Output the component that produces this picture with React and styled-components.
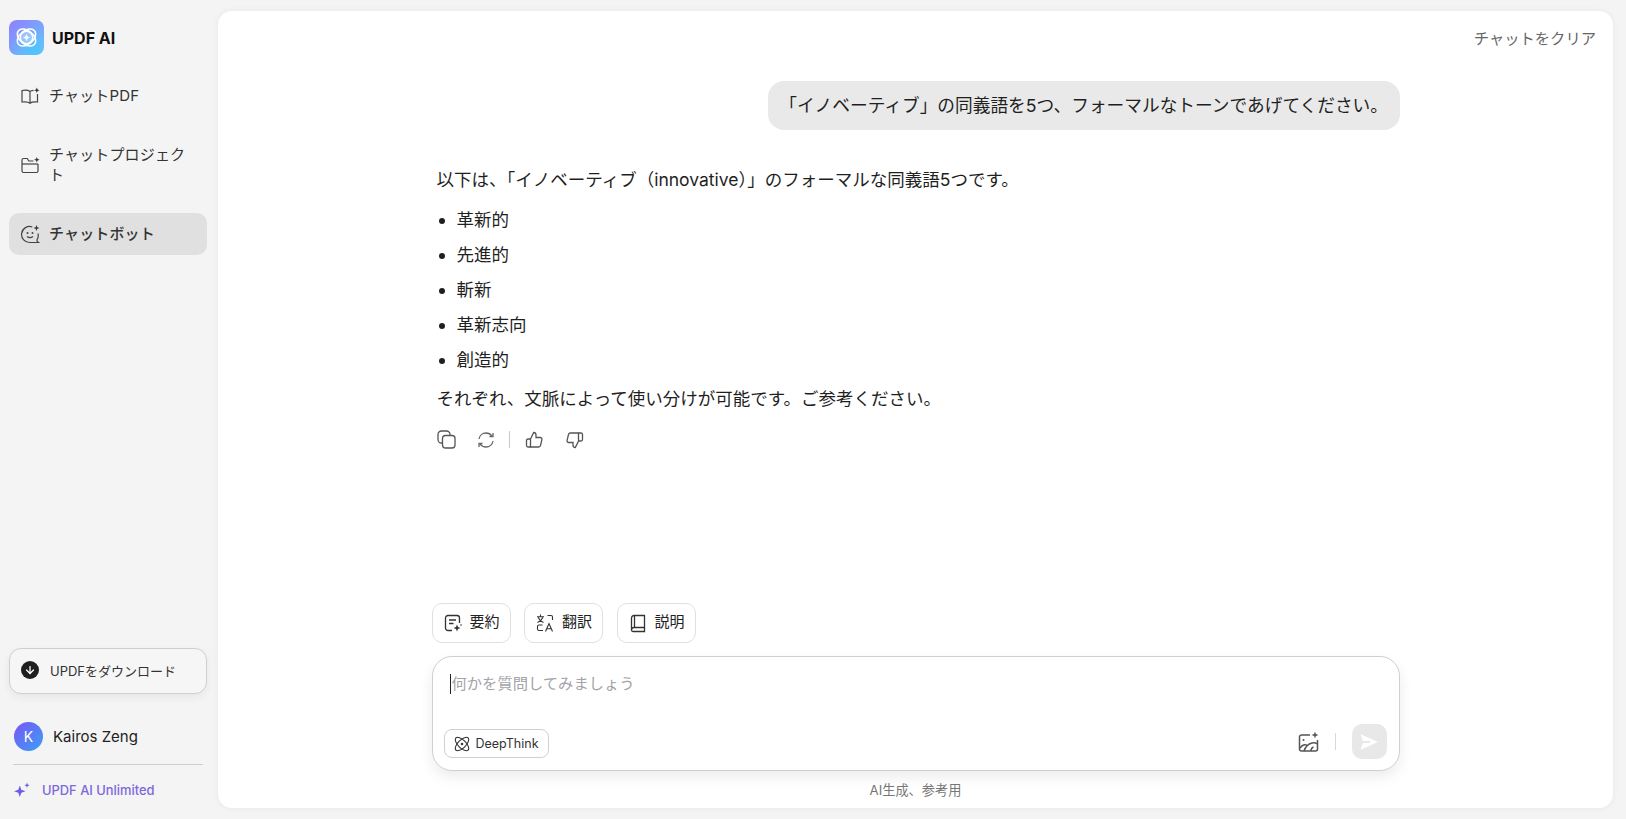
import React from 'react';
import styled, { createGlobalStyle } from 'styled-components';
import { ArrowDown, Atom } from 'lucide-react';

const GlobalStyle = createGlobalStyle`
  html, body { margin: 0; height: 100%; }
  body {
    background: #f4f4f4;
    color: #1f1f1f;
    font-family: "Inter", "Noto Sans CJK JP", sans-serif;
    overflow: hidden;
  }
  * { box-sizing: border-box; }
`;

const Page = styled.div`
  display: flex;
  width: 1626px;
  height: 819px;
  padding: 11px 13px 11px 9px;
`;

const Sidebar = styled.aside`
  width: 209px;
  flex: none;
  display: flex;
  flex-direction: column;
  padding-right: 11px;
`;

const Brand = styled.div`
  display: flex;
  align-items: center;
  gap: 8px;
  margin-top: 9px;
  font-size: 16px;
  font-weight: 700;
  color: #111;
`;

const LogoBox = styled.div`
  width: 35px;
  height: 35px;
  border-radius: 8px;
  background: radial-gradient(circle at 70% 85%, #4fc3fb 0%, rgba(79, 195, 251, 0) 60%),
    linear-gradient(135deg, #8d80ff 0%, #7ba4fb 55%, #7cc4fb 100%);
  display: flex;
  align-items: center;
  justify-content: center;
`;

const Nav = styled.nav`
  display: flex;
  flex-direction: column;
  margin-top: 20px;
  gap: 27px;
`;

const NavItem = styled.div`
  display: flex;
  align-items: center;
  gap: 9px;
  min-height: 42px;
  padding: 0 11px;
  border-radius: 10px;
  font-size: 15px;
  line-height: 20px;
  letter-spacing: 0.15px;
  color: #333;
  font-weight: ${p => (p.$active ? 500 : 400)};
  background: ${p => (p.$active ? '#e0e0e0' : 'transparent')};
  svg { flex: none; }
`;

const Spacer = styled.div`
  flex: 1;
`;

const DownloadButton = styled.div`
  display: flex;
  align-items: center;
  gap: 11px;
  height: 46px;
  padding: 0 11px 2px;
  border: 1px solid #cfcfcf;
  border-radius: 12px;
  background: #f6f6f6;
  box-shadow: 0 3px 8px rgba(0, 0, 0, 0.06);
  font-size: 13px;
  color: #333;
`;

const DownloadDot = styled.span`
  width: 18px;
  height: 18px;
  border-radius: 50%;
  background: #1f1f1f;
  color: #fff;
  display: flex;
  align-items: center;
  justify-content: center;
`;

const UserRow = styled.div`
  display: flex;
  align-items: center;
  gap: 10px;
  margin: 28px 0 0 5px;
  font-size: 15px;
  color: #222;
`;

const Avatar = styled.span`
  width: 29px;
  height: 29px;
  border-radius: 50%;
  background: linear-gradient(135deg, #7a55f5, #3aa0f5);
  color: #fff;
  font-size: 14px;
  display: flex;
  align-items: center;
  justify-content: center;
`;

const Divider = styled.div`
  height: 1px;
  background: #cfcfcf;
  margin: 13px 4px 0;
`;

const Unlimited = styled.div`
  display: flex;
  align-items: center;
  gap: 12px;
  margin: 17px 0 10px 5px;
  font-size: 12.9px;
  font-weight: 500;
  color: #7d68dd;
`;

const Panel = styled.main`
  flex: 1;
  background: #fff;
  border-radius: 14px;
  box-shadow: 0 0 6px rgba(0, 0, 0, 0.06);
  display: flex;
  flex-direction: column;
  align-items: center;
  position: relative;
`;

const ClearLink = styled.div`
  align-self: flex-end;
  margin: 18px 17px 0 0;
  font-size: 15.3px;
  line-height: 20px;
  color: #666;
`;

const Column = styled.div`
  width: 968px;
  flex: 1;
  display: flex;
  flex-direction: column;
`;

const Bubble = styled.div`
  align-self: flex-end;
  margin-top: 32px;
  height: 49px;
  padding: 0 11.5px 3px;
  border-radius: 16px;
  background: #e9e9e9;
  font-size: 17.7px;
  display: flex;
  align-items: center;
  white-space: nowrap;
`;

const Answer = styled.div`
  margin: 0 0 0 5px;
  padding-top: 38px;
  font-size: 17.5px;
  line-height: 24px;
  color: #1f1f1f;
`;

const Para = styled.p`
  margin: 0;
`;

const List = styled.ul`
  margin: 16px 0 15px;
  padding: 0 0 0 20px;
  li { margin-bottom: 11px; }
  li:last-child { margin-bottom: 0; }
`;

const Actions = styled.div`
  display: flex;
  align-items: center;
  margin: 19px 0 0 5px;
  color: #555;
  gap: 21px;
  svg:last-child { margin-left: 2px; }
`;

const ActionDivider = styled.span`
  width: 1px;
  height: 17px;
  background: #c9c9c9;
  margin: 0 -6px 0 -7px;
`;

const Grow = styled.div`
  flex: 1;
`;

const Chips = styled.div`
  display: flex;
  gap: 13.5px;
`;

const Chip = styled.div`
  display: flex;
  align-items: center;
  gap: 7px;
  height: 40px;
  padding: 0 10px;
  border: 1px solid #e0e0e0;
  border-radius: 10px;
  background: #fff;
  svg { flex: none; }
`;

const ChipLabel = styled.span`
  font-size: 15px;
  line-height: 20px;
  color: #222;
  margin-top: -2px;
`;

const InputBox = styled.div`
  height: 115px;
  margin-top: 13px;
  border: 1px solid #d0d0d0;
  border-radius: 20px;
  background: #fff;
  box-shadow: 0 6px 14px rgba(0, 0, 0, 0.08);
  display: flex;
  flex-direction: column;
  justify-content: space-between;
  padding: 17px 12px 11px 11px;
`;

const Placeholder = styled.div`
  margin-left: 6px;
  padding-left: 1px;
  border-left: 1px solid #222;
  height: 20px;
  line-height: 20px;
  font-size: 15.3px;
  color: #a3a3a8;
`;

const InputBar = styled.div`
  display: flex;
  align-items: flex-end;
  justify-content: space-between;
`;

const DeepThink = styled.div`
  display: flex;
  align-items: center;
  gap: 5px;
  height: 29px;
  margin-bottom: 1px;
  padding: 0 9px 0 8px;
  border: 1px solid #d0d0d0;
  border-radius: 8px;
  font-size: 12.5px;
  color: #333;
`;

const InputTools = styled.div`
  display: flex;
  align-items: center;
  gap: 15px;
  color: #555;
`;

const ToolDivider = styled.span`
  width: 1px;
  height: 17px;
  background: #d8d8d8;
  margin: 0 1px;
`;

const SendButton = styled.div`
  width: 35px;
  height: 35px;
  border-radius: 10px;
  background: #e8e8e8;
  display: flex;
  align-items: center;
  justify-content: center;
`;

const FootNote = styled.div`
  text-align: center;
  margin: 11px 0 10px;
  font-size: 13.2px;
  line-height: 16px;
  color: #777;
`;

const Logo = () => (
  <svg width="29" height="29" viewBox="0 0 29 29" fill="none" stroke="#fff" strokeWidth="1.5">
    <circle cx="14.5" cy="14.5" r="6.2" fill="rgba(255,255,255,0.3)" />
    <ellipse cx="14.5" cy="14.5" rx="10.500" ry="6.800" transform="rotate(-40 14.5 14.5)" />
    <ellipse cx="14.5" cy="14.5" rx="10.500" ry="6.800" transform="rotate(40 14.5 14.5)" />
    <path d="M14.5 10.800l1.100 2.600 2.600 1.100-2.600 1.100-1.100 2.600-1.100-2.600-2.600-1.100 2.600-1.100z" fill="#fff" stroke="none" />
  </svg>
);

const PdfIcon = () => (
  <svg width="20" height="20" viewBox="0 0 20 20" fill="none" stroke="#444" strokeWidth="1.200">
    <path d="M10 5.500C8.500 4.300 5 4 2 4.500v11.500c3-.4 6.500-.2 8 1.200 1.300-1.100 4-1.500 7.500-1.200V8" />
    <path d="M10 5.500v11.700" />
    <path d="M10 5.500c.7-.6 2-1 3.500-1.100" />
    <path d="M16.800 1.500l.8 2 2 .8-2 .8-.8 2-.8-2-2-.8 2-.8z" fill="#333" stroke="none" />
  </svg>
);

const FolderIcon = () => (
  <svg width="20" height="20" viewBox="0 0 20 20" fill="none" stroke="#444" strokeWidth="1.200">
    <path d="M13.500 6H8.800L7.300 3.500H3.500A1.500 1.500 0 0 0 2 5v11a1.500 1.500 0 0 0 1.500 1.500h13A1.500 1.500 0 0 0 18 16V9" />
    <path d="M2 9h16" />
    <path d="M16.800 2l.8 2 2 .8-2 .8-.8 2-.8-2-2-.8 2-.8z" fill="#333" stroke="none" />
  </svg>
);

const BotIcon = () => (
  <svg width="20" height="20" viewBox="0 0 20 20" fill="none" stroke="#444" strokeWidth="1.200">
    <path d="M12.300 3A8 8 0 1 0 10 18.500h8.500c-1.200-.7-1.700-1.500-1.500-2.700A8 8 0 0 0 18 9.500" />
    <circle cx="7.500" cy="9" r="1" fill="#444" stroke="none" />
    <circle cx="12.500" cy="9" r="1" fill="#444" stroke="none" />
    <path d="M7 12.500c1.700 1.400 4.300 1.400 6 0" />
    <path d="M16.500 1l.8 2.200 2.200.8-2.200.8-.8 2.200-.8-2.200-2.200-.8 2.200-.8z" fill="#333" stroke="none" />
  </svg>
);

const Sparkles = () => (
  <svg width="16" height="16" viewBox="0 0 16 16" fill="#6c5ce7">
    <path d="M5.800 3.500l1.500 4.200 4.200 1.500-4.200 1.500-1.500 4.200-1.500-4.200L.1 9.200l4.200-1.500z" />
    <path d="M13 .5l.7 2 2 .7-2 .7-.7 2-.7-2-2-.7 2-.7z" />
  </svg>
);

const CopyIcon = () => (
  <svg width="19" height="19" viewBox="0 0 19 19" fill="none" stroke="#555" strokeWidth="1.300">
    <rect x="1" y="1" width="12" height="12" rx="3.500" />
    <rect x="5.500" y="5.500" width="12.500" height="12.500" rx="3" fill="#fff" />
  </svg>
);

const RefreshIcon = () => (
  <svg width="18" height="18" viewBox="0 0 18 18" fill="none" stroke="#666" strokeWidth="1.300">
    <path d="M2 8C2.500 4.500 5.500 2 9 2c2.500 0 4.700 1.200 6 3.200" />
    <path d="M16 2v3.500h-3.500" />
    <path d="M16 10c-.5 3.500-3.500 6-7 6-2.500 0-4.700-1.200-6-3.200" />
    <path d="M2 16v-3.500h3.500" />
  </svg>
);

const ThumbUpIcon = () => (
  <svg width="18" height="18" viewBox="0 0 18 18" fill="none" stroke="#555" strokeWidth="1.300">
    <path d="M5.500 8l3.200-6.500c1.500 0 2.300 1 2.300 2.500v2.500h4.200c1.200 0 2 1 1.700 2.200l-1.300 5.500c-.2 1-1 1.800-2 1.800H5.500z" />
    <path d="M5.500 8H3A1.500 1.500 0 0 0 1.500 9.500v5A1.500 1.500 0 0 0 3 16h2.500" />
  </svg>
);

const ThumbDownIcon = () => (
  <svg width="18" height="18" viewBox="0 0 18 18" fill="none" stroke="#555" strokeWidth="1.300">
    <path d="M12.500 10l-3.200 6.500c-1.500 0-2.300-1-2.300-2.500v-2.500H2.800c-1.200 0-2-1-1.700-2.200l1.300-5.500c.2-1 1-1.800 2-1.800h8.100z" />
    <path d="M12.500 10H15a1.500 1.500 0 0 0 1.500-1.500v-5A1.500 1.500 0 0 0 15 2h-2.500" />
  </svg>
);

const SummaryIcon = () => (
  <svg width="20" height="20" viewBox="0 0 20 20" fill="none" stroke="#333" strokeWidth="1.300">
    <path d="M9 17.500H5A2.500 2.500 0 0 1 2.500 15V5A2.500 2.500 0 0 1 5 2.500h9A2.500 2.500 0 0 1 16.500 5v5" />
    <path d="M6 7h7M6 10.500h4.500" />
    <path d="M14 11.500l1 2.500 2.500 1-2.500 1-1 2.500-1-2.500-2.500-1 2.500-1z" fill="#333" stroke="none" />
    <circle cx="18" cy="12" r=".8" fill="#333" stroke="none" />
  </svg>
);

const TranslateIcon = () => (
  <svg width="20" height="20" viewBox="0 0 20 20" fill="none" stroke="#333" strokeWidth="1.100">
    <path d="M5.500 1.500v2M2 3.800h7M3.200 4.500C4.200 7 5.800 8.500 8.500 9.500M7.800 4.500C6.800 7 5.200 8.500 2.500 9.500" />
    <path d="M12.500 2.500H16a1.500 1.500 0 0 1 1.500 1.500v3" />
    <path d="M7.500 12H4a1.500 1.500 0 0 0-1.500 1.500V16A1.500 1.500 0 0 0 4 17.500h4" />
    <path d="M10.500 18.500l3.500-8 3.500 8M11.700 15.800h4.600" />
  </svg>
);

const BookIcon = () => (
  <svg width="20" height="20" viewBox="0 0 20 20" fill="none" stroke="#333" strokeWidth="1.300">
    <path d="M6 2.500h10.500v12H6A2.500 2.500 0 0 0 3.500 17V5A2.500 2.500 0 0 1 6 2.500z" />
    <path d="M3.500 17A1.500 1.500 0 0 0 5 18.500h11.500v-4" />
    <path d="M6.500 2.500v12" />
  </svg>
);

const ImageSparkIcon = () => (
  <svg width="22" height="22" viewBox="0 0 22 22" fill="none" stroke="#555" strokeWidth="1.500">
    <path d="M13 4H4.500A2 2 0 0 0 2.500 6v12a2 2 0 0 0 2 2h14a2 2 0 0 0 2-2V9" />
    <circle cx="6.500" cy="9" r="1" fill="#555" stroke="none" />
    <path d="M3 17c3-4 6-4 8-2M7 20c1-3 4-7 8-8 2-.5 4 0 5.500 1M14 20c0-2 1-3.500 2.500-4" />
    <path d="M18 .5l.9 2.600 2.600.9-2.600.9-.9 2.600-.9-2.600-2.600-.9 2.600-.9z" fill="#555" stroke="none" />
  </svg>
);

const SendIcon = () => (
  <svg width="20" height="20" viewBox="0 0 18 18" fill="#fff">
    <path d="M1.500 2L17 9 1.500 16 3.500 10H10V8H3.500z" />
  </svg>
);

const items = ['革新的', '先進的', '斬新', '革新志向', '創造的'];

export default function App() {
  return (
    <Page>
      <GlobalStyle />
      <Sidebar>
        <Brand>
          <LogoBox><Logo /></LogoBox>
          UPDF AI
        </Brand>
        <Nav>
          <NavItem><PdfIcon />チャットPDF</NavItem>
          <NavItem><FolderIcon />チャットプロジェクト</NavItem>
          <NavItem $active><BotIcon />チャットボット</NavItem>
        </Nav>
        <Spacer />
        <DownloadButton>
          <DownloadDot><ArrowDown size={12} strokeWidth={2.5} /></DownloadDot>
          UPDFをダウンロード
        </DownloadButton>
        <UserRow>
          <Avatar>K</Avatar>
          Kairos Zeng
        </UserRow>
        <Divider />
        <Unlimited>
          <Sparkles />
          UPDF AI Unlimited
        </Unlimited>
      </Sidebar>
      <Panel>
        <ClearLink>チャットをクリア</ClearLink>
        <Column>
          <Bubble>「イノベーティブ」の同義語を5つ、フォーマルなトーンであげてください。</Bubble>
          <Answer>
            <Para>以下は、「イノベーティブ（innovative）」のフォーマルな同義語5つです。</Para>
            <List>
              {items.map(item => <li key={item}>{item}</li>)}
            </List>
            <Para>それぞれ、文脈によって使い分けが可能です。ご参考ください。</Para>
          </Answer>
          <Actions>
            <CopyIcon />
            <RefreshIcon />
            <ActionDivider />
            <ThumbUpIcon />
            <ThumbDownIcon />
          </Actions>
          <Grow />
          <Chips>
            <Chip><SummaryIcon /><ChipLabel>要約</ChipLabel></Chip>
            <Chip><TranslateIcon /><ChipLabel>翻訳</ChipLabel></Chip>
            <Chip><BookIcon /><ChipLabel>説明</ChipLabel></Chip>
          </Chips>
          <InputBox>
            <Placeholder>何かを質問してみましょう</Placeholder>
            <InputBar>
              <DeepThink><Atom size={18} strokeWidth={1.5} />DeepThink</DeepThink>
              <InputTools>
                <ImageSparkIcon />
                <ToolDivider />
                <SendButton><SendIcon /></SendButton>
              </InputTools>
            </InputBar>
          </InputBox>
          <FootNote>AI生成、参考用</FootNote>
        </Column>
      </Panel>
    </Page>
  );
}
